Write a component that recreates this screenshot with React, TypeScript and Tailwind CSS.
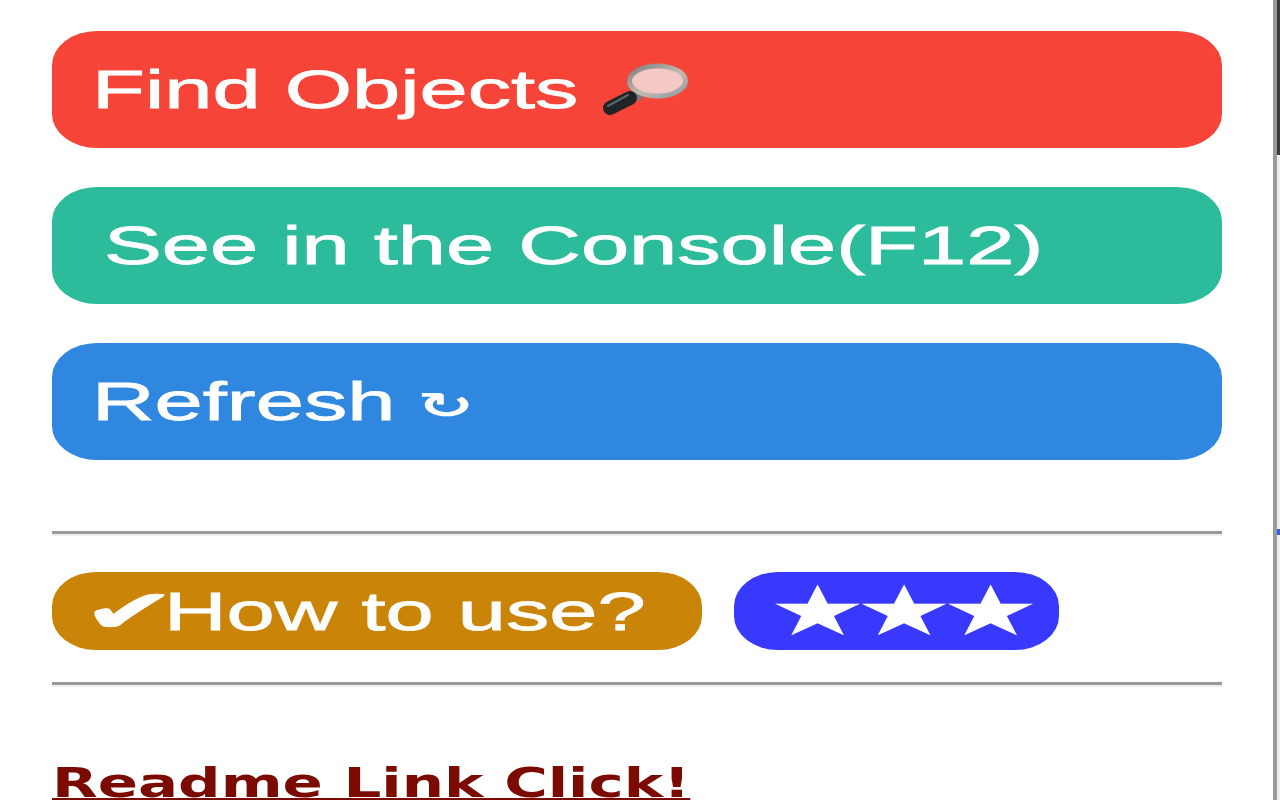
import React from 'react';

const sans = "font-['Liberation_Sans',Arial,sans-serif]";
const stretch = 'inline-block origin-left scale-x-[1.635] whitespace-nowrap [-webkit-text-stroke:0.8px_currentColor]';

function Magnifier() {
  return (
    <svg viewBox="0 0 90 56" className="w-[90px] h-[56px] shrink-0">
      <defs>
        <linearGradient id="rim" x1="0" y1="0" x2="1" y2="1">
          <stop offset="0" stopColor="#7f7f7f" />
          <stop offset="0.55" stopColor="#c4bcb3" />
          <stop offset="1" stopColor="#8c99a2" />
        </linearGradient>
      </defs>
      <path d="M32 32 L42 36" stroke="#77797a" strokeWidth="7" />
      <path d="M10 46 L30 36" stroke="#1f2426" strokeWidth="14" strokeLinecap="round" />
      <path d="M8 44 L28 33" stroke="#59646b" strokeWidth="2" strokeLinecap="round" />
      <ellipse cx="57.5" cy="19" rx="28" ry="15" fill="#f4c9c5" stroke="url(#rim)" strokeWidth="5" />
    </svg>
  );
}

function BigButton({ color, children, pad }: { color: string; children: React.ReactNode; pad: string }) {
  return (
    <div className={`${color} ${pad} h-[117px] rounded-[45px/34px] flex items-center text-white text-[53px] leading-none ${sans}`}>
      {children}
    </div>
  );
}

function Rule() {
  return <div className="h-[5px] border-t-[3px] border-[#999] bg-[#eee]" />;
}

function App() {
  return (
    <div className="h-screen w-full overflow-hidden bg-white flex blur-[0.6px]">
      <main className="flex-1 pl-[52px] pr-[51px] pt-[31px] flex flex-col">
        <div className="flex flex-col gap-[39px]">
          <BigButton color="bg-[#f64538]" pad="pl-[40px]">
            <span className={`${stretch} w-[297px] mr-[211px]`}>Find Objects</span>
            <Magnifier />
          </BigButton>
          <BigButton color="bg-[#2cbb9b]" pad="pl-[52px]">
            <span className={stretch}>See in the Console(F12)</span>
          </BigButton>
          <BigButton color="bg-[#3087e0]" pad="pl-[40px]">
            <span className={stretch}>Refresh</span>
            <span className="inline-block origin-left scale-x-[1.9] ml-[139px] mt-[8px] font-['DejaVu_Sans',sans-serif] font-bold text-[36px]">↻</span>
          </BigButton>
        </div>
        <div className="mt-[71px]"><Rule /></div>
        <div className="mt-[36px] flex gap-[32px]">
          <div className={`w-[650px] h-[78px] rounded-[44px/34px] bg-[#ca8407] text-white flex items-center pl-[30px] text-[53px] leading-none ${sans}`}>
            <span className="inline-block origin-left scale-x-[1.89] w-[44px] shrink-0 font-['DejaVu_Sans',sans-serif] text-[60px] [-webkit-text-stroke:0.8px_currentColor]">✔</span>
            <span className={`${stretch} ml-[38px]`}>How to use?</span>
          </div>
          <div className="w-[325px] h-[78px] rounded-[44px/34px] bg-[#3939fd] text-white flex items-center pl-[34px] text-[70px] leading-none font-['DejaVu_Sans',sans-serif]">
            <span className="inline-block origin-left scale-x-[1.58] tracking-[-8px] whitespace-nowrap">★★★</span>
          </div>
        </div>
        <div className="mt-[32px]"><Rule /></div>
        <a href="#" className="mt-[74px] block text-[#7b0a00] font-['DejaVu_Sans',sans-serif] font-bold text-[40px] leading-[44px]">
          <span className="inline-block origin-left scale-x-[1.485] whitespace-nowrap underline underline-offset-[1px]">Readme Link Click!</span>
        </a>
      </main>
      <aside className="w-[7px] flex border-l-[4px] border-[#999]">
        <div className="flex-1 bg-[#eee] flex flex-col">
          <div className="h-[155px] bg-[#3c3c3c]" />
          <div className="mt-[374px] h-[6px] bg-[#3060e0]" />
        </div>
      </aside>
    </div>
  );
}

export default App;
